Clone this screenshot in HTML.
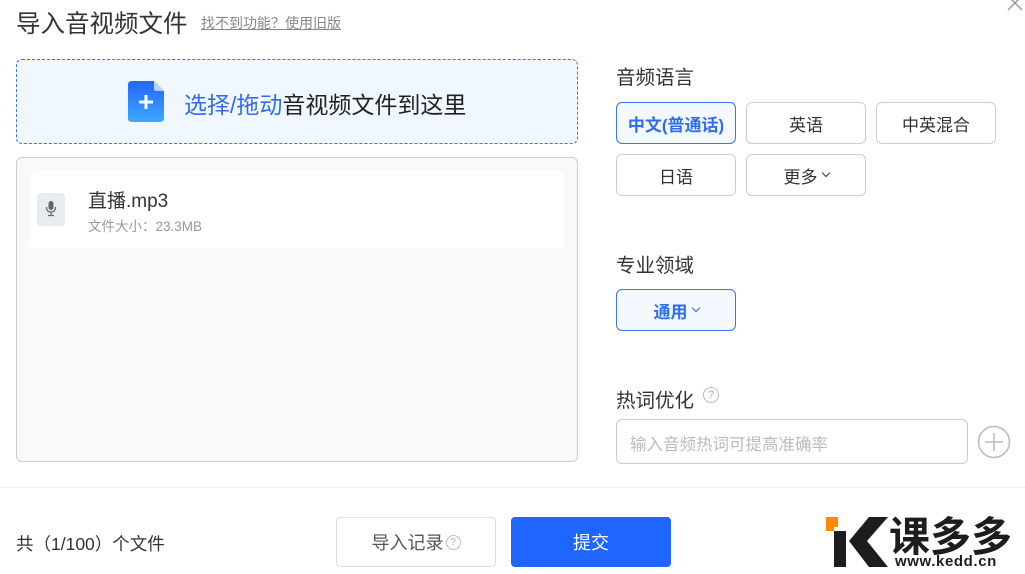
<!DOCTYPE html>
<html><head><meta charset="utf-8"><style>
*{margin:0;padding:0;box-sizing:border-box}
body{width:1025px;height:574px;background:#fff;font-family:"Liberation Sans","Noto Sans CJK SC",sans-serif;color:#333;position:relative;overflow:hidden}
.a{position:absolute;white-space:nowrap}
.btn{position:absolute;width:120px;height:42px;border:1px solid #ccc;border-radius:6px;display:flex;align-items:center;justify-content:center;font-size:17px;color:#333;background:#fff}
.sel{border-color:#3a73f5;background:#f4f8ff;color:#2f6cf0;font-weight:bold}
.chev{display:inline-block;width:6px;height:6px;border-right:1.5px solid currentColor;border-bottom:1.5px solid currentColor;transform:rotate(45deg);margin:-4px 0 0 5px}
</style></head><body>
<div class="a" style="left:16px;top:5px;font-size:24.5px;color:#333">导入音视频文件</div>
<div class="a" style="left:201px;top:13px;font-size:14px;color:#888;text-decoration:underline">找不到功能？使用旧版</div>
<svg class="a" style="left:1006px;top:-6px" width="18" height="18"><path d="M2 2L16 16M16 2L2 16" stroke="#999" stroke-width="1.5"/></svg>

<div class="a" style="left:16px;top:59px;width:562px;height:85px;border:1px dashed #3a73f5;border-radius:6px;background:#f0f7fe"></div>
<svg class="a" style="left:128px;top:81px" width="36" height="41"><defs><linearGradient id="g" x1="0" y1="0" x2="0" y2="1"><stop offset="0" stop-color="#2266ff"/><stop offset="1" stop-color="#3fa8ff"/></linearGradient></defs><path d="M4 0H26L36 10V37Q36 41 32 41H4Q0 41 0 37V4Q0 0 4 0Z" fill="url(#g)"/><path d="M26 0L36 10H28Q26 10 26 8Z" fill="#b9d3ff"/><path d="M18 14V28M11 21H25" stroke="#fff" stroke-width="3"/></svg>
<div class="a" style="left:184px;top:86px;font-size:23px;color:#222"><span style="color:#2f6cf0">选择/拖动</span>音视频文件到这里</div>

<div class="a" style="left:16px;top:157px;width:562px;height:305px;border:1px solid #ccc;border-radius:6px;background:#f8f9fb"></div>
<div class="a" style="left:30px;top:171px;width:534px;height:77px;background:#fff;border-radius:6px"></div>
<div class="a" style="left:37px;top:193px;width:28px;height:33px;background:#e8ebef;border-radius:4px"></div>
<svg class="a" style="left:45px;top:200px" width="12" height="18"><rect x="3.5" y="1" width="5" height="9" rx="2.5" fill="#666"/><path d="M1.5 7Q1.5 12 6 12Q10.5 12 10.5 7M6 12V15M3 15.5H9" stroke="#666" stroke-width="1.2" fill="none"/></svg>
<div class="a" style="left:88px;top:186px;font-size:19px;color:#333">直播.mp3</div>
<div class="a" style="left:88px;top:215px;font-size:13.5px;color:#999">文件大小：23.3MB</div>

<div class="a" style="left:616px;top:61px;font-size:19.5px;color:#333">音频语言</div>
<div class="btn sel" style="left:616px;top:102px">中文(普通话)</div>
<div class="btn" style="left:746px;top:102px">英语</div>
<div class="btn" style="left:876px;top:102px">中英混合</div>
<div class="btn" style="left:616px;top:154px">日语</div>
<div class="btn" style="left:746px;top:154px">更多<span class="chev"></span></div>
<div class="a" style="left:616px;top:249px;font-size:19.5px;color:#333">专业领域</div>
<div class="btn sel" style="left:616px;top:289px">通用<span class="chev"></span></div>
<div class="a" style="left:616px;top:384px;font-size:19.5px;color:#333">热词优化</div>
<div class="a" style="left:703px;top:387px;width:16px;height:16px;border:1px solid #bbb;border-radius:50%;font-size:11px;color:#aaa;text-align:center;line-height:14px">?</div>
<div class="a" style="left:616px;top:419px;width:352px;height:45px;border:1px solid #ccc;border-radius:6px;font-size:16.5px;color:#bbb;padding:11px 0 0 13px">输入音频热词可提高准确率</div>
<svg class="a" style="left:977px;top:425px" width="34" height="34"><circle cx="17" cy="17" r="15.5" fill="none" stroke="#bbb" stroke-width="1.5"/><path d="M17 8V26M8 17H26" stroke="#bbb" stroke-width="1.5"/></svg>

<div class="a" style="left:0;top:487px;width:1025px;height:1px;background:#eee"></div>
<div class="a" style="left:16px;top:531px;font-size:17.5px;color:#333">共（1/100）个文件</div>
<div class="a" style="left:336px;top:517px;width:160px;height:50px;border:1px solid #ddd;border-radius:4px;font-size:18px;color:#555;display:flex;align-items:center;justify-content:center">导入记录<span style="display:inline-block;width:15px;height:15px;border:1px solid #bbb;border-radius:50%;font-size:10px;color:#aaa;text-align:center;line-height:13px;margin-left:2px">?</span></div>
<div class="a" style="left:511px;top:517px;width:160px;height:50px;background:#1f66ff;border-radius:4px;font-size:18px;color:#fff;display:flex;align-items:center;justify-content:center">提交</div>

<svg class="a" style="left:825px;top:513px" width="200" height="61"><path d="M1 4H13V14H9V18H1Z" fill="#ff8a00"/><path d="M9 18H21V54H9Z" fill="#1d1d1d"/><path d="M63 4H44L24 28L44 54H63L42 28Z" fill="#1d1d1d"/><text x="64" y="38" font-size="41" font-weight="bold" fill="#1d1d1d" font-family="Noto Sans CJK SC,sans-serif">课多多</text><text x="70" y="53" font-size="15" font-weight="bold" fill="#1d1d1d" font-family="Liberation Sans,sans-serif" letter-spacing="0.6">www.kedd.cn</text></svg>
</body></html>
